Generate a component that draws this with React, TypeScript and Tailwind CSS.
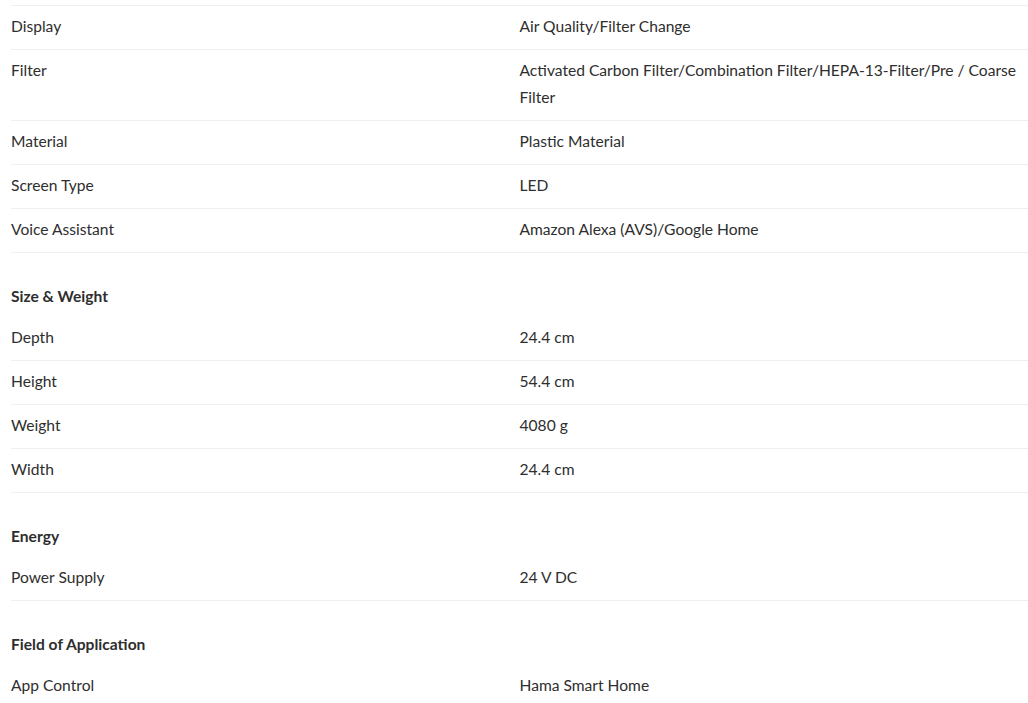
import React from "react";

type Row = { label: string; value: string };
type Section = { title?: string; rows: Row[] };

const sections: Section[] = [
  {
    rows: [
      { label: "Display", value: "Air Quality/Filter Change" },
      {
        label: "Filter",
        value:
          "Activated Carbon Filter/Combination Filter/HEPA-13-Filter/Pre / Coarse Filter",
      },
      { label: "Material", value: "Plastic Material" },
      { label: "Screen Type", value: "LED" },
      { label: "Voice Assistant", value: "Amazon Alexa (AVS)/Google Home" },
    ],
  },
  {
    title: "Size & Weight",
    rows: [
      { label: "Depth", value: "24.4 cm" },
      { label: "Height", value: "54.4 cm" },
      { label: "Weight", value: "4080 g" },
      { label: "Width", value: "24.4 cm" },
    ],
  },
  {
    title: "Energy",
    rows: [{ label: "Power Supply", value: "24 V DC" }],
  },
  {
    title: "Field of Application",
    rows: [{ label: "App Control", value: "Hama Smart Home" }],
  },
];

export default function App() {
  return (
    <div
      className="w-[1028px] h-[703px] overflow-hidden bg-white text-[#2e2e2e] text-[15.6px] leading-[26.5px]"
      style={{ fontFamily: '"Lato", "Noto Sans", sans-serif' }}
    >
      <div className="ml-[11px] w-[1017px]">
        <div className="h-[6px] border-b border-[#efefef]" />
        {sections.map((s, i) => (
          <div key={i}>
            {s.title && (
              <div className="pt-[30px] pb-[7.5px] font-bold">{s.title}</div>
            )}
            {s.rows.map((r) => (
              <div
                key={r.label}
                className="grid grid-cols-2 pt-[7px] pb-[9.5px] border-b border-[#efefef]"
              >
                <div>{r.label}</div>
                <div>{r.value}</div>
              </div>
            ))}
          </div>
        ))}
      </div>
    </div>
  );
}
